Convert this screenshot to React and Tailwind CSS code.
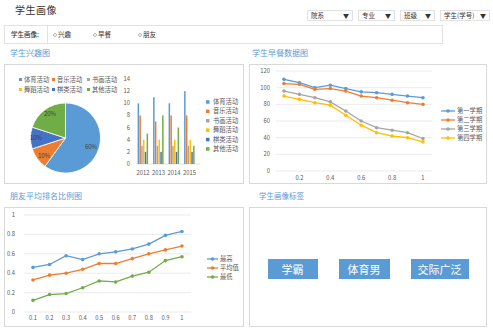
import React from "react";

const FONT = { fontFamily: '"Noto Sans CJK SC", "Noto Sans", sans-serif' };

const C = {
  blue: "#5b9bd5",
  orange: "#ed7d31",
  gray: "#a5a5a5",
  gold: "#ffc000",
  navy: "#4472c4",
  green: "#70ad47",
};

const ACTIVITIES = ["体育活动", "音乐活动", "书画活动", "舞蹈活动", "棋类活动", "其他活动"];
const ACT_COLORS = [C.blue, C.orange, C.gray, C.gold, C.navy, C.green];

const BAR_DATA = [
  { year: "2012", values: [10, 8, 3, 4, 2, 5] },
  { year: "2013", values: [11, 7, 3, 4, 2, 8] },
  { year: "2014", values: [10, 8, 3, 4, 2, 6] },
  { year: "2015", values: [12, 8, 3, 4, 2, 3] },
];

const BREAKFAST = [
  { name: "第一学期", color: C.blue, values: [110, 106, 100, 103, 99, 95, 94, 92, 90, 88] },
  { name: "第二学期", color: C.orange, values: [105, 104, 98, 99, 96, 90, 88, 85, 82, 80] },
  { name: "第三学期", color: C.gray, values: [96, 92, 88, 83, 72, 60, 52, 49, 46, 39] },
  { name: "第四学期", color: C.gold, values: [90, 86, 82, 79, 67, 55, 46, 42, 40, 35] },
];

const FRIENDS = [
  { name: "最高", color: C.blue, values: [0.46, 0.49, 0.58, 0.54, 0.6, 0.62, 0.65, 0.7, 0.79, 0.83] },
  { name: "平均值", color: C.orange, values: [0.33, 0.38, 0.4, 0.44, 0.5, 0.5, 0.55, 0.6, 0.64, 0.68] },
  { name: "最低", color: C.green, values: [0.12, 0.18, 0.19, 0.25, 0.32, 0.31, 0.37, 0.41, 0.53, 0.57] },
];

const AXIS = "#595959";
const GRID = "#e3e3e3";

function pt(cx, cy, r, a) {
  const rad = (a * Math.PI) / 180;
  return [cx + r * Math.sin(rad), cy - r * Math.cos(rad)];
}

function slice(cx, cy, r, a0, a1) {
  const [x0, y0] = pt(cx, cy, r, a0);
  const [x1, y1] = pt(cx, cy, r, a1);
  const large = a1 - a0 > 180 ? 1 : 0;
  return `M${cx},${cy} L${x0},${y0} A${r},${r} 0 ${large} 1 ${x1},${y1} Z`;
}

function InterestChart() {
  const cx = 60.5, cy = 73, r = 35;
  const slices = [
    { a0: 0, a1: 216, color: C.blue },
    { a0: 216, a1: 252, color: C.orange },
    { a0: 252, a1: 288, color: C.navy },
    { a0: 288, a1: 360, color: C.green },
  ];
  const labels = [
    { x: 86, y: 84, t: "60%" },
    { x: 39, y: 93, t: "10%" },
    { x: 31, y: 75, t: "10%" },
    { x: 45, y: 51, t: "20%" },
  ];
  const legendPos = [
    [14, 16], [47, 16], [82, 16],
    [14, 26], [47, 26], [82, 26],
  ];
  const y = (v) => 99 - v * 6.07;
  const groups = [138, 153.5, 169, 184.5];
  const bw = 1.8;

  return (
    <svg width="238" height="118" style={FONT}>
      {legendPos.map(([x, ly], i) => (
        <g key={i}>
          <rect x={x} y={ly - 3} width="3" height="3" fill={ACT_COLORS[i]} />
          <text x={x + 5} y={ly + 0.5} fontSize="6.3" fill={AXIS}>{ACTIVITIES[i]}</text>
        </g>
      ))}
      {slices.map((s, i) => (
        <path key={i} d={slice(cx, cy, r, s.a0, s.a1)} fill={s.color} stroke="#fff" strokeWidth="0.8" />
      ))}
      {labels.map((l, i) => (
        <text key={i} x={l.x} y={l.y} fontSize="6" fill="#404040" textAnchor="middle">{l.t}</text>
      ))}

      {[0, 2, 4, 6, 8, 10, 12, 14].map((v) => (
        <text key={v} x="125" y={y(v) + 2} fontSize="5.8" fill={AXIS} textAnchor="end">{v}</text>
      ))}
      <line x1="131" y1={y(0)} x2="195" y2={y(0)} stroke="#d0d0d0" strokeWidth="0.6" />
      {BAR_DATA.map((g, gi) => (
        <g key={g.year}>
          {g.values.map((v, i) => (
            <rect
              key={i}
              x={groups[gi] - 3 * bw + i * bw}
              y={y(v)}
              width={bw - 0.3}
              height={y(0) - y(v)}
              fill={ACT_COLORS[i]}
            />
          ))}
          <text x={groups[gi]} y="110" fontSize="5.8" fill={AXIS} textAnchor="middle">{g.year}</text>
        </g>
      ))}
      {ACTIVITIES.map((a, i) => (
        <g key={a}>
          <rect x="201" y={37.7 + i * 9.4 - 2.5} width="3.5" height="3.5" fill={ACT_COLORS[i]} />
          <text x="208" y={37.7 + i * 9.4 + 1.2} fontSize="6.3" fill={AXIS}>{a}</text>
        </g>
      ))}
    </svg>
  );
}

function LineChart({ series, ticks, yOf, yLabelX, gridX0, gridX1, x0, step, xLabels, xLabelY, legend, fmt }) {
  const xs = (i) => x0 + i * step;
  return (
    <svg width="238" height="118" style={FONT}>
      {ticks.map((v) => (
        <g key={v}>
          <line x1={gridX0} y1={yOf(v)} x2={gridX1} y2={yOf(v)} stroke={GRID} strokeWidth="0.7" />
          <text x={yLabelX} y={yOf(v) + 2} fontSize="5.8" fill={AXIS} textAnchor="end">{fmt(v)}</text>
        </g>
      ))}
      {xLabels.map(([i, t]) => (
        <text key={t} x={xs(i)} y={xLabelY} fontSize="5.8" fill={AXIS} textAnchor="middle">{t}</text>
      ))}
      {series.map((s) => (
        <g key={s.name}>
          <polyline
            points={s.values.map((v, i) => `${xs(i)},${yOf(v)}`).join(" ")}
            fill="none"
            stroke={s.color}
            strokeWidth="1.3"
          />
          {s.values.map((v, i) => (
            <circle key={i} cx={xs(i)} cy={yOf(v)} r="1.8" fill={s.color} />
          ))}
        </g>
      ))}
      {series.map((s, i) => {
        const ly = legend.y + i * legend.step;
        return (
          <g key={s.name}>
            <line x1={legend.x} y1={ly} x2={legend.x + legend.w} y2={ly} stroke={s.color} strokeWidth="1.3" />
            <circle cx={legend.x + legend.w / 2} cy={ly} r="1.8" fill={s.color} />
            <text x={legend.x + legend.w + 2} y={ly + 2} fontSize="6.3" fill={AXIS}>{s.name}</text>
          </g>
        );
      })}
    </svg>
  );
}

function Panel({ children, className = "" }) {
  return (
    <div className={`h-[120px] border border-[#d9d9d9] bg-white overflow-hidden ${className}`}>
      {children}
    </div>
  );
}

function Select({ label, width }) {
  return (
    <div
      className="h-[11px] border border-[#e2e2e2] flex items-center justify-between px-[3px] text-[6.5px] text-[#333]"
      style={{ width }}
    >
      <span>{label}</span>
      <span className="text-[6px]">▼</span>
    </div>
  );
}

function Radio({ label, className = "" }) {
  return (
    <div className={`flex items-center gap-[1px] ${className}`}>
      <span className="w-[4px] h-[4px] rounded-full border border-[#b8b8b8]" />
      <span>{label}</span>
    </div>
  );
}

export default function App() {
  return (
    <div className="w-[493px] h-[332px] bg-white overflow-hidden" style={FONT}>
      <div className="flex justify-between h-[25px]">
        <div className="pl-[15px] pt-[2px] text-[10px] tracking-[0.5px] text-[#333]">学生画像</div>
        <div className="flex gap-[5px] pt-[10px] pr-[3px]">
          <Select label="院系" width={46} />
          <Select label="专业" width={37} />
          <Select label="班级" width={35} />
          <Select label="学生(学号)" width={50} />
        </div>
      </div>

      <div className="ml-[4px] w-[439px] h-[19px] border border-[#e2e2e2] flex items-center text-[6.5px] text-[#333]">
        <div className="w-[43px] h-full border-r border-[#e2e2e2] flex items-center pl-[6px] font-medium">学生画像:</div>
        <Radio label="兴趣" className="ml-[5px]" />
        <Radio label="早餐" className="ml-[22px]" />
        <Radio label="朋友" className="ml-[27px]" />
      </div>

      <div className="grid grid-cols-[240px_238px] gap-x-[5px] pl-[4px]">
        <div className="h-[20px] pl-[6px] pt-[3px] text-[8px] text-[#5b9bd5]">学生兴趣图</div>
        <div className="h-[20px] pl-[3px] pt-[3px] text-[8px] text-[#5b9bd5]">学生早餐数据图</div>
        <Panel>
          <InterestChart />
        </Panel>
        <Panel>
          <LineChart
            series={BREAKFAST}
            ticks={[0, 20, 40, 60, 80, 100, 120]}
            yOf={(v) => 106 - v * 0.833}
            yLabelX={20}
            gridX0={26}
            gridX1={182}
            x0={34}
            step={15.44}
            xLabels={[[1, "0.2"], [3, "0.4"], [5, "0.6"], [7, "0.8"], [9, "1"]]}
            xLabelY={115}
            legend={{ x: 191, y: 46, step: 9, w: 14 }}
            fmt={(v) => v}
          />
        </Panel>
        <div className="h-[23px] pl-[6px] pt-[6px] text-[8px] text-[#5b9bd5]">朋友平均排名比例图</div>
        <div className="h-[23px] pl-[10px] pt-[6px] text-[7.5px] text-[#5b9bd5]">学生画像标签</div>
        <Panel>
          <LineChart
            series={FRIENDS}
            ticks={[0, 0.2, 0.4, 0.6, 0.8, 1]}
            yOf={(v) => 104 - v * 97}
            yLabelX={10}
            gridX0={19}
            gridX1={186}
            x0={28}
            step={16.55}
            xLabels={[0, 1, 2, 3, 4, 5, 6, 7, 8, 9].map((i) => [i, i === 9 ? "1" : `0.${i + 1}`])}
            xLabelY={112}
            legend={{ x: 202, y: 51, step: 9, w: 11 }}
            fmt={(v) => (v === 0 || v === 1 ? `${v}` : v.toFixed(1))}
          />
        </Panel>
        <Panel className="flex items-center justify-center gap-[21px] pt-[4px]">
          {["学霸", "体育男", "交际广泛"].map((t) => (
            <div
              key={t}
              className="h-[20px] px-[14px] bg-[#5b9bd5] text-white text-[11px] flex items-center justify-center leading-none"
              style={t === "交际广泛" ? { paddingLeft: 7, paddingRight: 7 } : t === "体育男" ? { paddingLeft: 9, paddingRight: 9 } : undefined}
            >
              {t}
            </div>
          ))}
        </Panel>
      </div>
    </div>
  );
}
